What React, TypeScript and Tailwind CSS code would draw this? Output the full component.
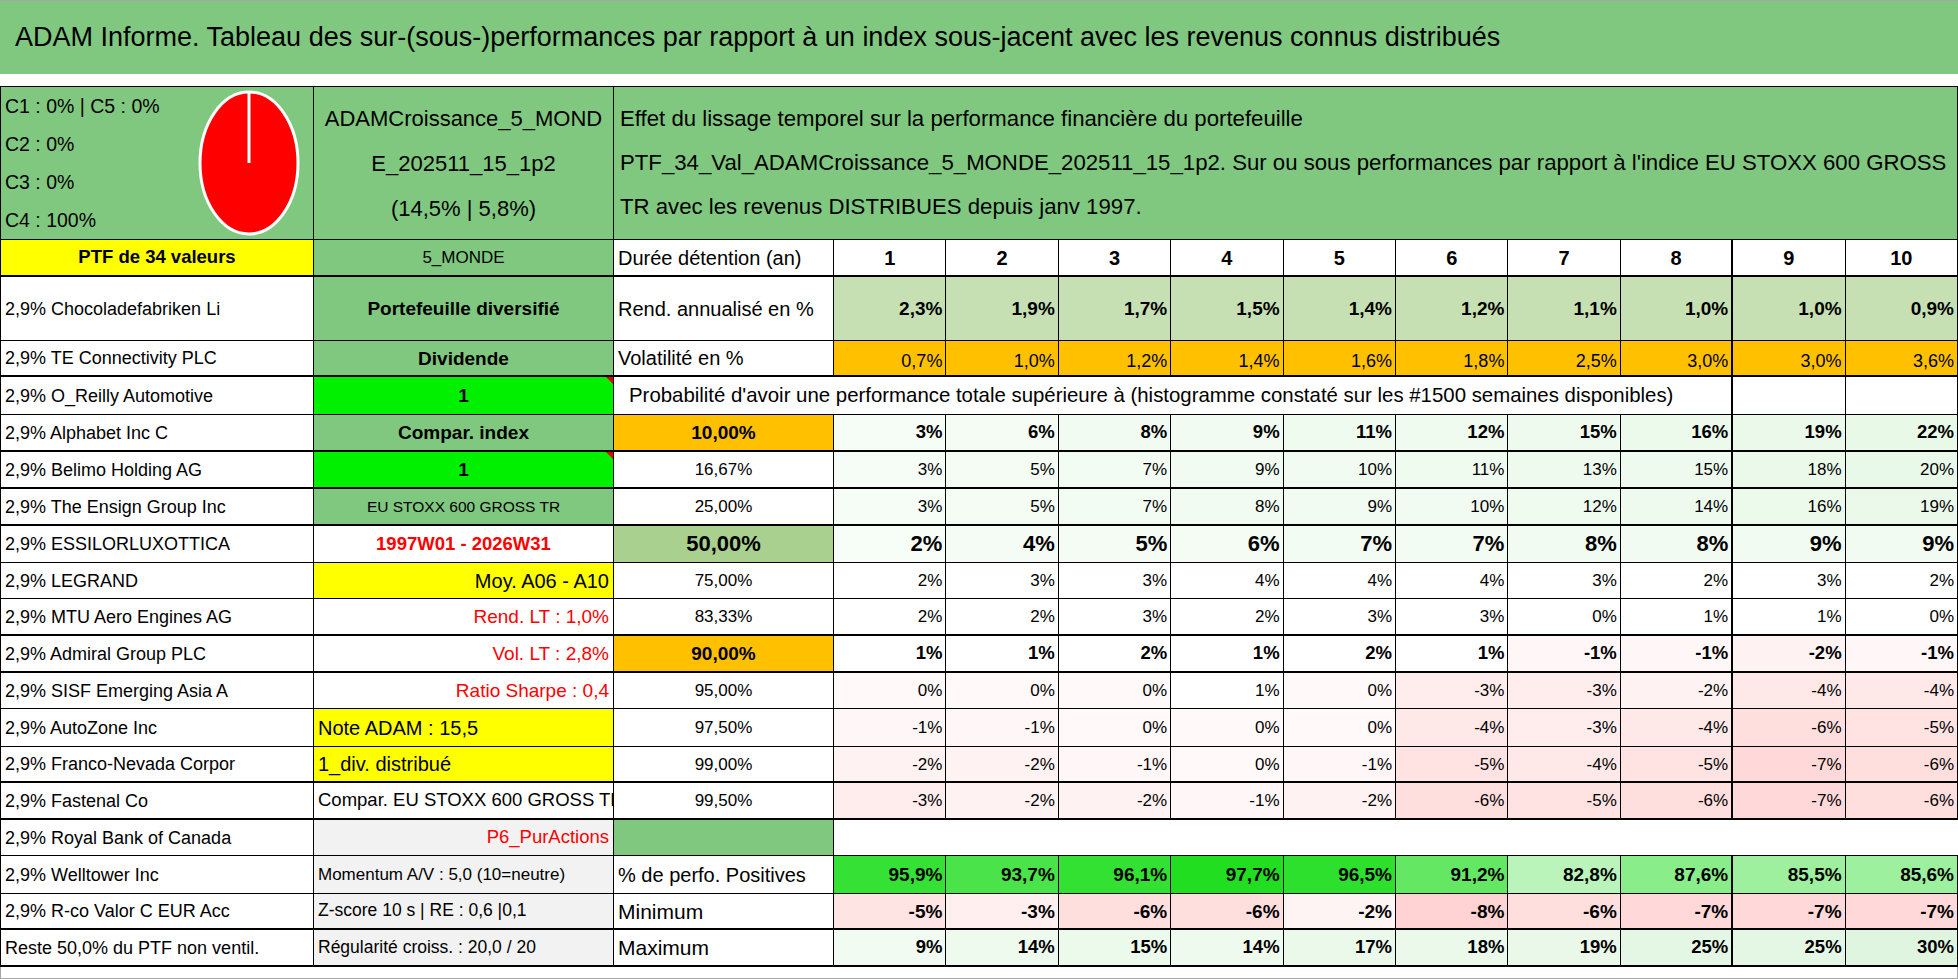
import React from "react";

const FONT = "font-['Liberation_Sans',Arial,sans-serif]";
const GRID = "grid grid-cols-[314px_300px_220px_repeat(10,minmax(0,1fr))]";
const GREEN = "bg-[#80c880]";

function Cell({
  className = "",
  thick = false,
  thickR = false,
  children,
  style,
}: {
  className?: string;
  thick?: boolean;
  thickR?: boolean;
  children?: React.ReactNode;
  style?: React.CSSProperties;
}) {
  return (
    <div
      className={`relative flex items-center overflow-hidden whitespace-nowrap border-black ${thick ? "border-b-2" : "border-b"} ${thickR ? "border-r-2" : "border-r"} ${className}`}
      style={style}
    >
      {children}
    </div>
  );
}

function Flag() {
  return <span className="absolute top-0 right-0 h-0 w-0 border-l-[7px] border-l-transparent border-t-[7px] border-t-[#e00000]" />;
}

function Pie() {
  return (
    <svg width="104" height="148" viewBox="0 0 104 148">
      <ellipse cx="52" cy="74" rx="49" ry="71" fill="#ff0000" stroke="#ffffff" strokeWidth="3" />
      <line x1="52" y1="3" x2="52" y2="74" stroke="#ffffff" strokeWidth="3" />
    </svg>
  );
}

const pct = (v: number) => `${v}%`;
const dec = (v: number) => `${v.toFixed(1).replace(".", ",")}%`;

function probBg(v: number, tint: string) {
  if (v < 0) {
    const g = Math.round(252 - 5 * -v);
    return `rgb(255,${g},${g})`;
  }
  if (v === 0 && tint === "p") return "#fff9f9";
  if (tint === "g") {
    const rb = Math.round(248 - v * 0.75);
    const g = Math.round(253 - v * 0.2);
    return `rgb(${rb},${g},${rb})`;
  }
  return "#ffffff";
}

const posBg = (v: number) => {
  const t = (v - 80) / 18;
  const rb = Math.round(215 - 185 * t);
  const g = Math.round(248 - 26 * t);
  return `rgb(${rb},${g},${rb})`;
};
const minBg = (v: number) => {
  const g = Math.round(255 - 5.5 * -v);
  return `rgb(255,${g},${g})`;
};
const maxBg = (v: number) => {
  const rb = Math.round(249 - 0.85 * v);
  const g = Math.round(254 - 0.3 * v);
  return `rgb(${rb},${g},${rb})`;
};

type ProbRow = {
  h: string;
  thick: boolean;
  name: string;
  b: React.ReactNode;
  bCls: string;
  flag?: boolean;
  c: string;
  cCls: string;
  vals: number[];
  vCls: string;
  tint: string;
};

const probRows: ProbRow[] = [
  { h: "h-[37px]", thick: true, name: "2,9% Alphabet Inc C", b: "Compar. index", bCls: `${GREEN} justify-center font-bold text-[19px]`, c: "10,00%", cCls: "bg-[#ffc000] font-bold text-[19px]", vals: [3, 6, 8, 9, 11, 12, 15, 16, 19, 22], vCls: "font-bold text-[18.5px]", tint: "g" },
  { h: "h-[37px]", thick: true, name: "2,9% Belimo Holding AG", b: "1", bCls: "bg-[#00f000] justify-center font-bold text-[19px]", flag: true, c: "16,67%", cCls: "text-[17px]", vals: [3, 5, 7, 9, 10, 11, 13, 15, 18, 20], vCls: "text-[17px]", tint: "g" },
  { h: "h-[37px]", thick: true, name: "2,9% The Ensign Group Inc", b: "EU STOXX 600 GROSS TR", bCls: `${GREEN} justify-center text-[15.5px]`, c: "25,00%", cCls: "text-[17px]", vals: [3, 5, 7, 8, 9, 10, 12, 14, 16, 19], vCls: "text-[17px]", tint: "g" },
  { h: "h-[37px]", thick: false, name: "2,9% ESSILORLUXOTTICA", b: "1997W01 - 2026W31", bCls: "justify-center font-bold text-[18.5px] text-[#ff0000]", c: "50,00%", cCls: "bg-[#a9d08e] font-bold text-[22px]", vals: [2, 4, 5, 6, 7, 7, 8, 8, 9, 9], vCls: "font-bold text-[22px]", tint: "g" },
  { h: "h-[36px]", thick: false, name: "2,9% LEGRAND", b: "Moy. A06 - A10", bCls: "bg-[#ffff00] justify-end pr-[4px] text-[20px]", c: "75,00%", cCls: "text-[17px]", vals: [2, 3, 3, 4, 4, 4, 3, 2, 3, 2], vCls: "text-[17px]", tint: "w" },
  { h: "h-[37px]", thick: true, name: "2,9% MTU Aero Engines AG", b: "Rend. LT : 1,0%", bCls: "justify-end pr-[4px] text-[19px] text-[#ff0000]", c: "83,33%", cCls: "text-[17px]", vals: [2, 2, 3, 2, 3, 3, 0, 1, 1, 0], vCls: "text-[17px]", tint: "w" },
  { h: "h-[37px]", thick: true, name: "2,9% Admiral Group PLC", b: "Vol. LT : 2,8%", bCls: "justify-end pr-[4px] text-[19px] text-[#ff0000]", c: "90,00%", cCls: "bg-[#ffc000] font-bold text-[19px]", vals: [1, 1, 2, 1, 2, 1, -1, -1, -2, -1], vCls: "font-bold text-[18.5px]", tint: "w" },
  { h: "h-[36px]", thick: false, name: "2,9% SISF Emerging Asia A", b: "Ratio Sharpe : 0,4", bCls: "justify-end pr-[4px] text-[19px] text-[#ff0000]", c: "95,00%", cCls: "text-[17px]", vals: [0, 0, 0, 1, 0, -3, -3, -2, -4, -4], vCls: "text-[17px]", tint: "p" },
  { h: "h-[38px]", thick: false, name: "2,9% AutoZone Inc", b: "Note ADAM : 15,5", bCls: "bg-[#ffff00] pl-[4px] text-[20px]", c: "97,50%", cCls: "text-[17px]", vals: [-1, -1, 0, 0, 0, -4, -3, -4, -6, -5], vCls: "text-[17px]", tint: "p" },
  { h: "h-[36px]", thick: true, name: "2,9% Franco-Nevada Corpor", b: "1_div. distribué", bCls: "bg-[#ffff00] pl-[4px] text-[20px]", c: "99,00%", cCls: "text-[17px]", vals: [-2, -2, -1, 0, -1, -5, -4, -5, -7, -6], vCls: "text-[17px]", tint: "p" },
  { h: "h-[37px]", thick: true, name: "2,9% Fastenal Co", b: "Compar. EU STOXX 600 GROSS TR", bCls: "pl-[4px] text-[18.5px]", c: "99,50%", cCls: "text-[17px]", vals: [-3, -2, -2, -1, -2, -6, -5, -6, -7, -6], vCls: "text-[17px]", tint: "p" },
];

const rend = ["2,3%", "1,9%", "1,7%", "1,5%", "1,4%", "1,2%", "1,1%", "1,0%", "1,0%", "0,9%"];
const vol = ["0,7%", "1,0%", "1,2%", "1,4%", "1,6%", "1,8%", "2,5%", "3,0%", "3,0%", "3,6%"];
const positives = [95.9, 93.7, 96.1, 97.7, 96.5, 91.2, 82.8, 87.6, 85.5, 85.6];
const minimum = [-5, -3, -6, -6, -2, -8, -6, -7, -7, -7];
const maximum = [9, 14, 15, 14, 17, 18, 19, 25, 25, 30];

const years = [1, 2, 3, 4, 5, 6, 7, 8, 9, 10];

export default function App() {
  return (
    <div className={`${FONT} h-[979px] w-[1958px] overflow-hidden bg-white text-[18px] leading-none text-black`}>
      {/* Title */}
      <div className={`flex h-[74px] items-center whitespace-nowrap border-t border-[#a6a6a6] pl-[15px] text-[27px] ${GREEN}`}>
        ADAM Informe. Tableau des sur-(sous-)performances par rapport à un index sous-jacent avec les revenus connus distribués
      </div>
      <div className="h-[12px]" />

      {/* Header block */}
      <div className={`${GRID} h-[154px] ${GREEN}`}>
        <div className="flex items-center justify-between border border-black pl-[4px] pr-[12px]">
          <div className="flex flex-col text-[19.5px] leading-[38px]">
            <span>C1 : 0% | C5 : 0%</span>
            <span>C2 : 0%</span>
            <span>C3 : 0%</span>
            <span>C4 : 100%</span>
          </div>
          <Pie />
        </div>
        <div className="flex flex-col items-center justify-center border-y border-r border-black text-[22px] leading-[45px]">
          <span>ADAMCroissance_5_MOND</span>
          <span>E_202511_15_1p2</span>
          <span>(14,5% | 5,8%)</span>
        </div>
        <div className="col-span-11 flex flex-col justify-center overflow-hidden whitespace-nowrap border-y border-r border-black pl-[6px] text-[22.2px] leading-[44px]">
          <span>Effet du lissage temporel sur la performance financière du portefeuille</span>
          <span>PTF_34_Val_ADAMCroissance_5_MONDE_202511_15_1p2. Sur ou sous performances par rapport à l'indice EU STOXX 600 GROSS</span>
          <span>TR avec les revenus DISTRIBUES depuis janv 1997.</span>
        </div>
      </div>

      {/* Durée détention */}
      <div className={`${GRID} h-[37px]`}>
        <Cell thick className="justify-center border-l bg-[#ffff00] font-bold text-[18.5px]">PTF de 34 valeurs</Cell>
        <Cell thick className={`${GREEN} justify-center text-[17px]`}>5_MONDE</Cell>
        <Cell thick className="pl-[4px] text-[20px]">Durée détention (an)</Cell>
        {years.map((y, i) => (
          <Cell key={y} thick thickR={i === 7} className="justify-center font-bold text-[20px]">{y}</Cell>
        ))}
      </div>

      {/* Rendement */}
      <div className={`${GRID} h-[64px]`}>
        <Cell className="border-l pl-[4px]">2,9% Chocoladefabriken Li</Cell>
        <Cell className={`${GREEN} justify-center font-bold text-[19px]`}>Portefeuille diversifié</Cell>
        <Cell className="pl-[4px] text-[20px]">Rend. annualisé en %</Cell>
        {rend.map((v, i) => (
          <Cell key={i} thickR={i === 7} className="justify-end bg-[#c6e0b4] pr-[3px] font-bold text-[19px]">{v}</Cell>
        ))}
      </div>

      {/* Volatilité */}
      <div className={`${GRID} h-[36px]`}>
        <Cell thick className="border-l pl-[4px]">2,9% TE Connectivity PLC</Cell>
        <Cell thick className={`${GREEN} justify-center font-bold text-[19px]`}>Dividende</Cell>
        <Cell thick className="pl-[4px] text-[20px]">Volatilité en %</Cell>
        {vol.map((v, i) => (
          <Cell key={i} thick thickR={i === 7} className="items-end justify-end bg-[#ffc000] pb-[5px] pr-[3px] text-[18px]">{v}</Cell>
        ))}
      </div>

      {/* Probabilité header */}
      <div className={`${GRID} h-[38px]`}>
        <Cell className="border-l pl-[4px]">2,9% O_Reilly Automotive</Cell>
        <Cell className="justify-center bg-[#00f000] font-bold text-[19px]">
          1
          <Flag />
        </Cell>
        <Cell thickR className="col-span-9 pl-[15px] text-[20.4px]">
          Probabilité d'avoir une performance totale supérieure à (histogramme constaté sur les #1500 semaines disponibles)
        </Cell>
        <Cell />
        <Cell />
      </div>

      {probRows.map((r) => (
        <div key={r.name} className={`${GRID} ${r.h}`}>
          <Cell thick={r.thick} className="border-l pl-[4px]">{r.name}</Cell>
          <Cell thick={r.thick} className={r.bCls}>
            {r.b}
            {r.flag && <Flag />}
          </Cell>
          <Cell thick={r.thick} className={`justify-center ${r.cCls}`}>{r.c}</Cell>
          {r.vals.map((v, i) => (
            <Cell
              key={i}
              thick={r.thick}
              thickR={i === 7}
              className={`justify-end pr-[3px] ${r.vCls}`}
              style={{ backgroundColor: probBg(v, r.tint) }}
            >
              {pct(v)}
            </Cell>
          ))}
        </div>
      ))}

      {/* Royal Bank */}
      <div className={`${GRID} h-[36px]`}>
        <Cell className="border-l pl-[4px]">2,9% Royal Bank of Canada</Cell>
        <Cell className="justify-end bg-[#f2f2f2] pr-[4px] text-[18.5px] text-[#ff0000]">P6_PurActions</Cell>
        <Cell className={GREEN} />
        <div className="col-span-10 border-b border-black" />
      </div>

      {/* Positives */}
      <div className={`${GRID} h-[38px]`}>
        <Cell className="border-l pl-[4px]">2,9% Welltower Inc</Cell>
        <Cell className="bg-[#f2f2f2] pl-[4px] text-[17px]">Momentum A/V : 5,0 (10=neutre)</Cell>
        <Cell className="pl-[4px] text-[20px]">% de perfo. Positives</Cell>
        {positives.map((v, i) => (
          <Cell key={i} thickR={i === 7} className="justify-end pr-[3px] font-bold text-[19px]" style={{ backgroundColor: posBg(v) }}>
            {dec(v)}
          </Cell>
        ))}
      </div>

      {/* Minimum */}
      <div className={`${GRID} h-[36px]`}>
        <Cell thick className="border-l pl-[4px]">2,9% R-co Valor C EUR Acc</Cell>
        <Cell thick className="bg-[#f2f2f2] pl-[4px] text-[17.5px]">Z-score 10 s | RE : 0,6 |0,1</Cell>
        <Cell thick className="pl-[4px] text-[21px]">Minimum</Cell>
        {minimum.map((v, i) => (
          <Cell key={i} thick thickR={i === 7} className="justify-end pr-[3px] font-bold text-[19px]" style={{ backgroundColor: minBg(v) }}>
            {pct(v)}
          </Cell>
        ))}
      </div>

      {/* Maximum */}
      <div className={`${GRID} h-[37px]`}>
        <Cell thick className="border-l pl-[4px]">Reste 50,0% du PTF non ventil.</Cell>
        <Cell thick className="bg-[#f2f2f2] pl-[4px] text-[17.5px]">Régularité croiss. : 20,0 / 20</Cell>
        <Cell thick className="pl-[4px] text-[21px]">Maximum</Cell>
        {maximum.map((v, i) => (
          <Cell key={i} thick thickR={i === 7} className="justify-end pr-[3px] font-bold text-[18.5px]" style={{ backgroundColor: maxBg(v) }}>
            {pct(v)}
          </Cell>
        ))}
      </div>

      <div className="h-[12px] border-x border-b border-[#a6a6a6]" />
    </div>
  );
}
